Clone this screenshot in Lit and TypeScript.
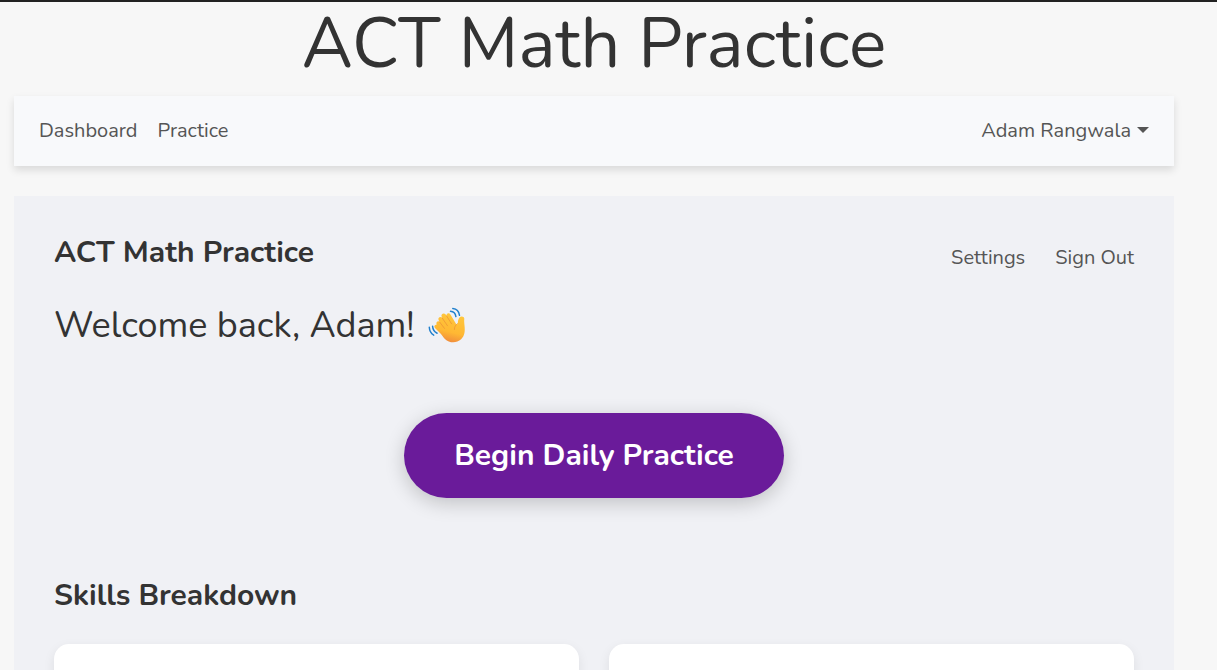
import { LitElement, html, css } from "lit";
import { customElement, property } from "lit/decorators.js";

@customElement("waving-hand")
class WavingHand extends LitElement {
  static styles = css`
    :host {
      display: inline-flex;
    }
    svg {
      width: 40px;
      height: 40px;
    }
  `;

  render() {
    return html`
      <svg viewBox="0 0 40 40" role="img" aria-label="Waving hand">
        <defs>
          <linearGradient id="skin" x1="0.7" y1="0" x2="0.45" y2="1">
            <stop offset="0" stop-color="#ffc83d" />
            <stop offset="0.65" stop-color="#ffb833" />
            <stop offset="1" stop-color="#f08a3c" />
          </linearGradient>
        </defs>
        <path
          fill="url(#skin)"
          d="M9.7 18.4c-1.2-2 1.2-4.1 2.9-2.5l-.9-1.6c-1.4-2.6 1.8-4.7 3.6-2.3l-.6-1.2c-1.3-2.7 2.2-4.8 4-2.3l1 1.6c-.9-2.6 2.2-4.1 3.7-1.6l5.6 9.3c.7 1 1.8.6 1.8-.6.1-2.3.5-4.3 1.9-5.9 1.4-1.6 4.6-.9 4.6 1.5-.3 2 0 4.4.2 6.8.6 5.6.3 10.3-3.4 13.7-4.7 4.2-11.6 4-16.2-.4-2-2-2.9-3.7-4.4-5.4L8.200 22.300c-1.700-2.200-.300-3.700 1.500-3.900z"
        />
        <path
          fill="none"
          stroke="#ee9535"
          stroke-width="0.8"
          stroke-linecap="round"
          d="M12.6 16l4.900 6.400M15.200 12l5.300 7.800M19.600 10l5 7.800M30.400 17.600c-1.600 1.500-3.200 3-3 5.900"
        />
        <path
          fill="none"
          stroke="#2180cd"
          stroke-width="1.500"
          stroke-linecap="round"
          d="M23.500 5.200c2.900.2 5 2.300 5.400 5.400M25.800 2.500c3.600.4 6.200 3.200 6.700 6.800M5.600 20.300c.2 3.300 1.800 5.700 4.500 6.900M2.300 21.300c.2 3.500 1.700 6.300 4.400 7.800"
        />
      </svg>
    `;
  }
}

@customElement("app-root")
class AppRoot extends LitElement {
  @property() user = "Adam Rangwala";

  static styles = css`
    :host {
      display: flex;
      flex-direction: column;
      box-sizing: border-box;
      height: 100vh;
      padding: 0 43px 0 14px;
      border-top: 2px solid #222;
      background: #f7f7f7;
      color: #333;
      font-family: Nunito, Lato, "Open Sans", sans-serif;
      font-size: 20px;
      line-height: 30px;
    }
    h1,
    h2,
    p {
      margin: 0;
    }
    .title {
      padding-bottom: 10px;
      font-size: 70px;
      font-weight: 400;
      line-height: 84px;
      text-align: center;
    }
    .nav {
      display: flex;
      align-items: center;
      justify-content: space-between;
      padding: 20px 25px;
      background: #f8f9fb;
      box-shadow: 0 4px 8px rgba(0, 0, 0, 0.12);
    }
    .links {
      display: flex;
      gap: 20px;
    }
    a,
    .account {
      color: #555;
      text-decoration: none;
    }
    .account {
      display: flex;
      align-items: center;
      gap: 6px;
      padding: 0;
      border: 0;
      background: none;
      font: inherit;
    }
    .caret {
      width: 12px;
      height: 6px;
      margin-bottom: 2px;
      fill: #555;
    }
    .panel {
      flex: 1;
      min-height: 0;
      overflow: hidden;
      margin-top: 30px;
      padding: 40px 40px 0;
      background: #f0f1f5;
    }
    .head {
      display: flex;
      align-items: center;
      justify-content: space-between;
    }
    .head h2 {
      margin-bottom: 10px;
    }
    .head .links {
      gap: 30px;
    }
    h2 {
      font-size: 30px;
      font-weight: 700;
      line-height: 33px;
    }
    .welcome {
      display: flex;
      align-items: center;
      gap: 12px;
      margin-top: 20px;
      font-size: 36px;
      line-height: 54px;
    }
    .action {
      display: flex;
      justify-content: center;
      padding: 60px 0 81px;
    }
    .begin {
      padding: 20px 50px;
      border: 0;
      border-radius: 50px;
      background: #6a1b9a;
      box-shadow: 0 5px 20px rgba(0, 0, 0, 0.2);
      color: #fff;
      font: inherit;
      font-size: 30px;
      font-weight: 700;
      line-height: 45px;
    }
    .cards {
      display: grid;
      grid-template-columns: 1fr 1fr;
      gap: 30px;
      margin-top: 32px;
    }
    .card {
      min-height: 200px;
      border-radius: 15px;
      background: #fff;
      box-shadow: 0 4px 12px rgba(0, 0, 0, 0.08);
    }
  `;

  render() {
    return html`
      <h1 class="title">ACT Math Practice</h1>
      <nav class="nav">
        <div class="links">
          <a href="#dashboard">Dashboard</a>
          <a href="#practice">Practice</a>
        </div>
        <button class="account" type="button" aria-haspopup="true">
          ${this.user}
          <svg class="caret" viewBox="0 0 12 6" aria-hidden="true">
            <path d="M0 0h12L6 6z" />
          </svg>
        </button>
      </nav>
      <main class="panel">
        <header class="head">
          <h2>ACT Math Practice</h2>
          <div class="links">
            <a href="#settings">Settings</a>
            <a href="#sign-out">Sign Out</a>
          </div>
        </header>
        <p class="welcome">
          <span>Welcome back, ${this.user.split(" ")[0]}!</span>
          <waving-hand></waving-hand>
        </p>
        <div class="action">
          <button class="begin" type="button">Begin Daily Practice</button>
        </div>
        <h2>Skills Breakdown</h2>
        <div class="cards">
          <section class="card"></section>
          <section class="card"></section>
        </div>
      </main>
    `;
  }
}
